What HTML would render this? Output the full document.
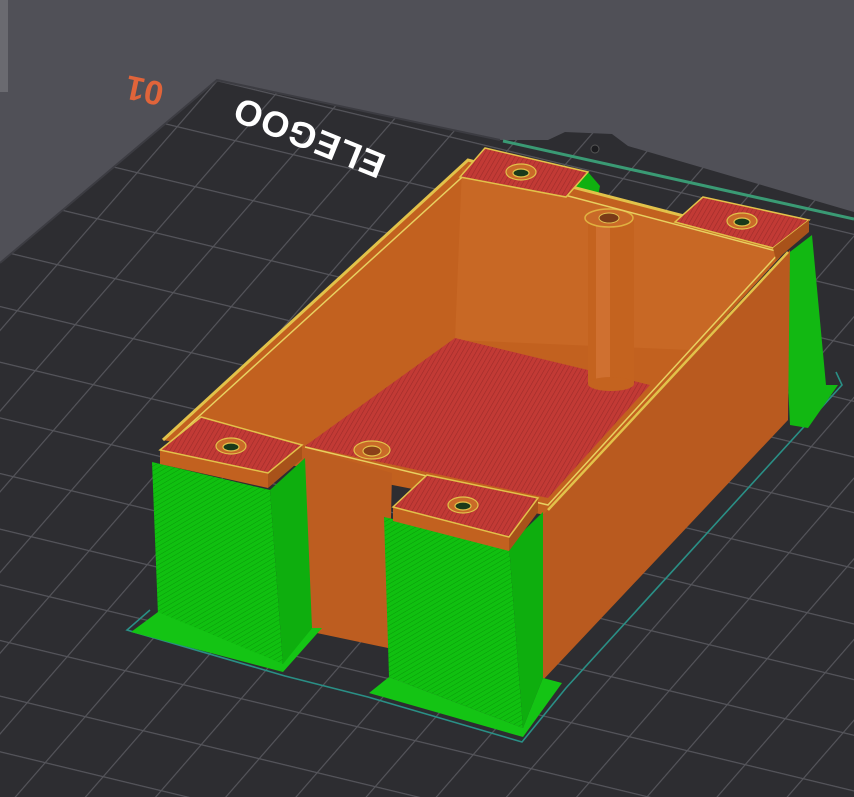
<!DOCTYPE html>
<html><head><meta charset="utf-8"><style>
html,body{margin:0;padding:0;width:854px;height:797px;overflow:hidden;background:#505057}
svg{display:block}
</style></head><body>
<svg width="854" height="797" viewBox="0 0 854 797" xmlns="http://www.w3.org/2000/svg">
<defs>
<pattern id="grid" width="100" height="100" patternUnits="userSpaceOnUse" patternTransform="matrix(0.58,0.14,-0.4,0.46,217,80)">
<rect width="100" height="100" fill="#2d2d31"/>
<path d="M0 1H100M1 0V100" stroke="#55555b" stroke-width="2.4"/>
</pattern>
<pattern id="hatch" width="4" height="4" patternUnits="userSpaceOnUse" patternTransform="rotate(30)">
<rect width="4" height="4" fill="#c23a35"/>
<path d="M0 0V4" stroke="#9e2c2a" stroke-width="1.2"/>
</pattern>
<pattern id="gh" width="4" height="4" patternUnits="userSpaceOnUse" patternTransform="rotate(60)">
<rect width="4" height="4" fill="#10c010"/>
<path d="M0 0V4" stroke="#0a9a0a" stroke-width="1"/>
</pattern>
</defs>
<rect width="854" height="797" fill="#505057"/>
<rect x="0" y="0" width="8" height="92" fill="#6a6a70"/>
<polygon points="217,80 500,140 548,140 565,132 612,134 628,146 854,212 854,797 0,797 0,263" fill="url(#grid)"/>
<polyline points="0,263 217,80 500,140" fill="none" stroke="#3c3c42" stroke-width="2"/>
<circle cx="595" cy="149" r="4" fill="#1c1c1f" stroke="#555" stroke-width="1"/>
<line x1="503" y1="141" x2="854" y2="219" stroke="#3a9a74" stroke-width="3"/>
<text x="145" y="88" transform="rotate(192 145 88)" font-family="Liberation Sans, sans-serif" font-weight="bold" font-size="34" fill="#e0643a" text-anchor="middle" dominant-baseline="middle">01</text>
<text x="310" y="135" transform="rotate(202 310 135)" font-family="Liberation Sans, sans-serif" font-weight="bold" font-size="36" fill="#ffffff" text-anchor="middle" dominant-baseline="middle" letter-spacing="1">ELEGOO</text>

<path d="M150,610 L127,630 L285,676 L368,697 L522,742 L566,688 L842,385 L836,372" fill="none" stroke="#2a8f86" stroke-width="1.6"/>

<polygon points="782,258 812,235 826,385 838,385 808,428 790,425" fill="#12b812"/>
<polygon points="566,197 588,172 600,186 596,206" fill="#10b010"/>

<polygon points="468,160 792,244 545,515 163,440" fill="#c2611f"/>
<polygon points="462,168 780,252 690,350 455,340" fill="#c86825"/>
<polygon points="455,338 650,385 548,498 305,446" fill="url(#hatch)"/>
<rect x="588" y="218" width="46" height="166" fill="#c4631f"/>
<rect x="596" y="218" width="14" height="166" fill="#cf7030"/>
<ellipse cx="611" cy="384" rx="23" ry="7" fill="#c4631f"/>
<ellipse cx="609" cy="218" rx="24" ry="9" fill="#c96a28" stroke="#e0b040" stroke-width="1.5"/>
<ellipse cx="609" cy="218" rx="10" ry="5" fill="#7a3a18" stroke="#e0c050" stroke-width="1"/>
<polyline points="163,440 468,160 792,244" fill="none" stroke="#e2c24a" stroke-width="3"/>
<polyline points="175,438 470,170 780,252 548,505 305,447" fill="none" stroke="#e8d060" stroke-width="1.5"/>
<polygon points="543,515 790,250 788,420 543,680" fill="#b95a1f"/>
<polyline points="548,510 788,252" fill="none" stroke="#e2c24a" stroke-width="2.5"/>
<polygon points="300,447 392,473 388,648 312,632" fill="#bd5d20"/>

<polygon points="152,462 270,490 283,665 158,615" fill="url(#gh)"/>
<polygon points="270,490 305,458 312,628 283,665" fill="#0eae0e"/>
<polygon points="131,632 158,612 283,664 312,628 322,628 283,672" fill="#14c414"/>
<polygon points="384,517 509,545 523,728 389,677" fill="url(#gh)"/>
<polygon points="509,545 543,512 543,678 523,728" fill="#0eae0e"/>
<polygon points="369,693 389,677 523,728 543,678 562,683 523,737" fill="#14c414"/>

<polygon points="160,450 268,473 268,488 160,464" fill="#c2611f"/>
<polygon points="268,473 302,445 302,459 268,488" fill="#a8521a"/>
<polygon points="160,450 201,417 302,445 268,473" fill="url(#hatch)" stroke="#e2c24a" stroke-width="1.5"/>
<polygon points="393,507 509,537 509,551 393,521" fill="#c2611f"/>
<polygon points="509,537 538,498 538,512 509,551" fill="#a8521a"/>
<polygon points="393,507 427,475 538,498 509,537" fill="url(#hatch)" stroke="#e2c24a" stroke-width="1.5"/>
<polygon points="485,148 588,172 566,197 460,177" fill="url(#hatch)" stroke="#e2c24a" stroke-width="1.5"/>
<polygon points="703,197 809,220 773,248 675,222" fill="url(#hatch)" stroke="#e2c24a" stroke-width="1.5"/>
<polygon points="773,248 809,220 809,232 776,260" fill="#a8521a"/>
<g stroke="#e2c24a" stroke-width="1.2">
<ellipse cx="231" cy="446" rx="15" ry="8" fill="#c96a28"/><ellipse cx="231" cy="447" rx="8" ry="4" fill="#1a3a1a"/>
<ellipse cx="463" cy="505" rx="15" ry="8" fill="#c96a28"/><ellipse cx="463" cy="506" rx="8" ry="4" fill="#1a3a1a"/>
<ellipse cx="521" cy="172" rx="15" ry="8" fill="#c96a28"/><ellipse cx="521" cy="173" rx="8" ry="4" fill="#1a3a1a"/>
<ellipse cx="742" cy="221" rx="15" ry="8" fill="#c96a28"/><ellipse cx="742" cy="222" rx="8" ry="4" fill="#1a3a1a"/>
<ellipse cx="372" cy="450" rx="18" ry="9" fill="#c96a28"/><ellipse cx="372" cy="451" rx="9" ry="5" fill="#8a4018"/>
</g>
</svg>
</body></html>
